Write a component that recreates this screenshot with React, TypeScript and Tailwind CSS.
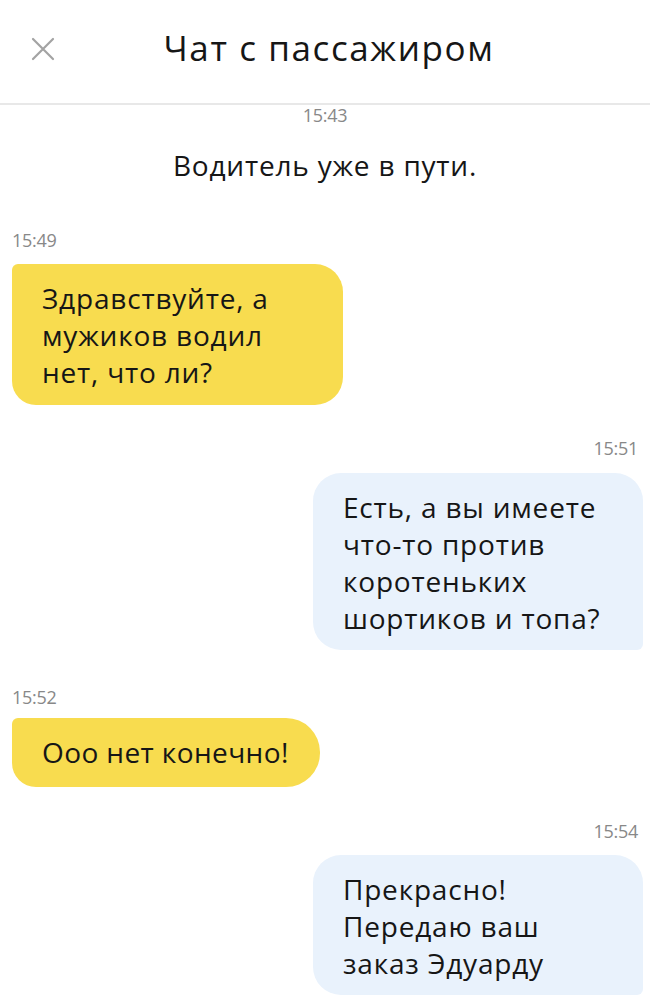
const font = { fontFamily: '"Open Sans", "Noto Sans", sans-serif' };

function Time({ t, side }: { t: string; side: 'left' | 'right' | 'center' }) {
  const align =
    side === 'left' ? 'pl-[12px] text-left' : side === 'right' ? 'pr-[12px] text-right' : 'text-center';
  return (
    <div className={`h-[20px] leading-[20px] text-[18px] tracking-[-0.3px] text-[#888888] ${align}`}>{t}</div>
  );
}

export default function App() {
  return (
    <div className="w-[650px] h-[1007px] bg-white overflow-hidden text-[#161616]" style={font}>
      <header className="relative h-[105px] border-b-2 border-[#e8e8e8] flex items-center justify-center">
        <svg
          className="absolute left-[31px] top-[37px]"
          width="24"
          height="24"
          viewBox="0 0 24 24"
          fill="none"
          stroke="#a3a3a3"
          strokeWidth="2.2"
          strokeLinecap="round"
        >
          <path d="M2 2 L22 22 M22 2 L2 22" />
        </svg>
        <h1 className="text-[35px] font-normal tracking-[1.6px] -mt-[6px] ml-[8px]">Чат с пассажиром</h1>
      </header>

      <Time t="15:43" side="center" />
      <div className="mt-[23px] h-[34px] leading-[34px] text-center text-[28px] tracking-[0.8px]">
        Водитель уже в пути.
      </div>

      <div className="mt-[48px]">
        <Time t="15:49" side="left" />
      </div>
      <div className="mt-[14px] ml-[12px] w-[331px] bg-[#f8dc4f] rounded-tl-[6px] rounded-bl-[24px] rounded-r-[28px] pl-[30px] pt-[16px] pb-[14px] text-[28px] tracking-[0.8px] leading-[37px]">
        Здравствуйте, а<br />
        мужиков водил<br />
        нет, что ли?
      </div>

      <div className="mt-[33px]">
        <Time t="15:51" side="right" />
      </div>
      <div className="mt-[15px] ml-[313px] w-[330px] bg-[#e9f2fc] rounded-l-[28px] rounded-tr-[28px] rounded-br-[6px] pl-[30px] pt-[16px] pb-[13px] text-[28px] tracking-[0.8px] leading-[37px]">
        Есть, а вы имеете
        <br />
        что-то против
        <br />
        коротеньких
        <br />
        шортиков и топа?
      </div>

      <div className="mt-[37px]">
        <Time t="15:52" side="left" />
      </div>
      <div className="mt-[11px] ml-[12px] w-[308px] bg-[#f8dc4f] rounded-tl-[6px] rounded-bl-[24px] rounded-r-[34px] pl-[30px] pt-[16px] pb-[16px] text-[28px] tracking-[0.4px] leading-[37px]">
        Ооо нет конечно!
      </div>

      <div className="mt-[34px]">
        <Time t="15:54" side="right" />
      </div>
      <div className="mt-[14px] ml-[313px] w-[330px] bg-[#e9f2fc] rounded-l-[28px] rounded-tr-[28px] rounded-br-[6px] pl-[30px] pt-[16px] pb-[13px] text-[28px] tracking-[0.8px] leading-[37px]">
        Прекрасно!
        <br />
        Передаю ваш
        <br />
        заказ Эдуарду
      </div>
    </div>
  );
}
